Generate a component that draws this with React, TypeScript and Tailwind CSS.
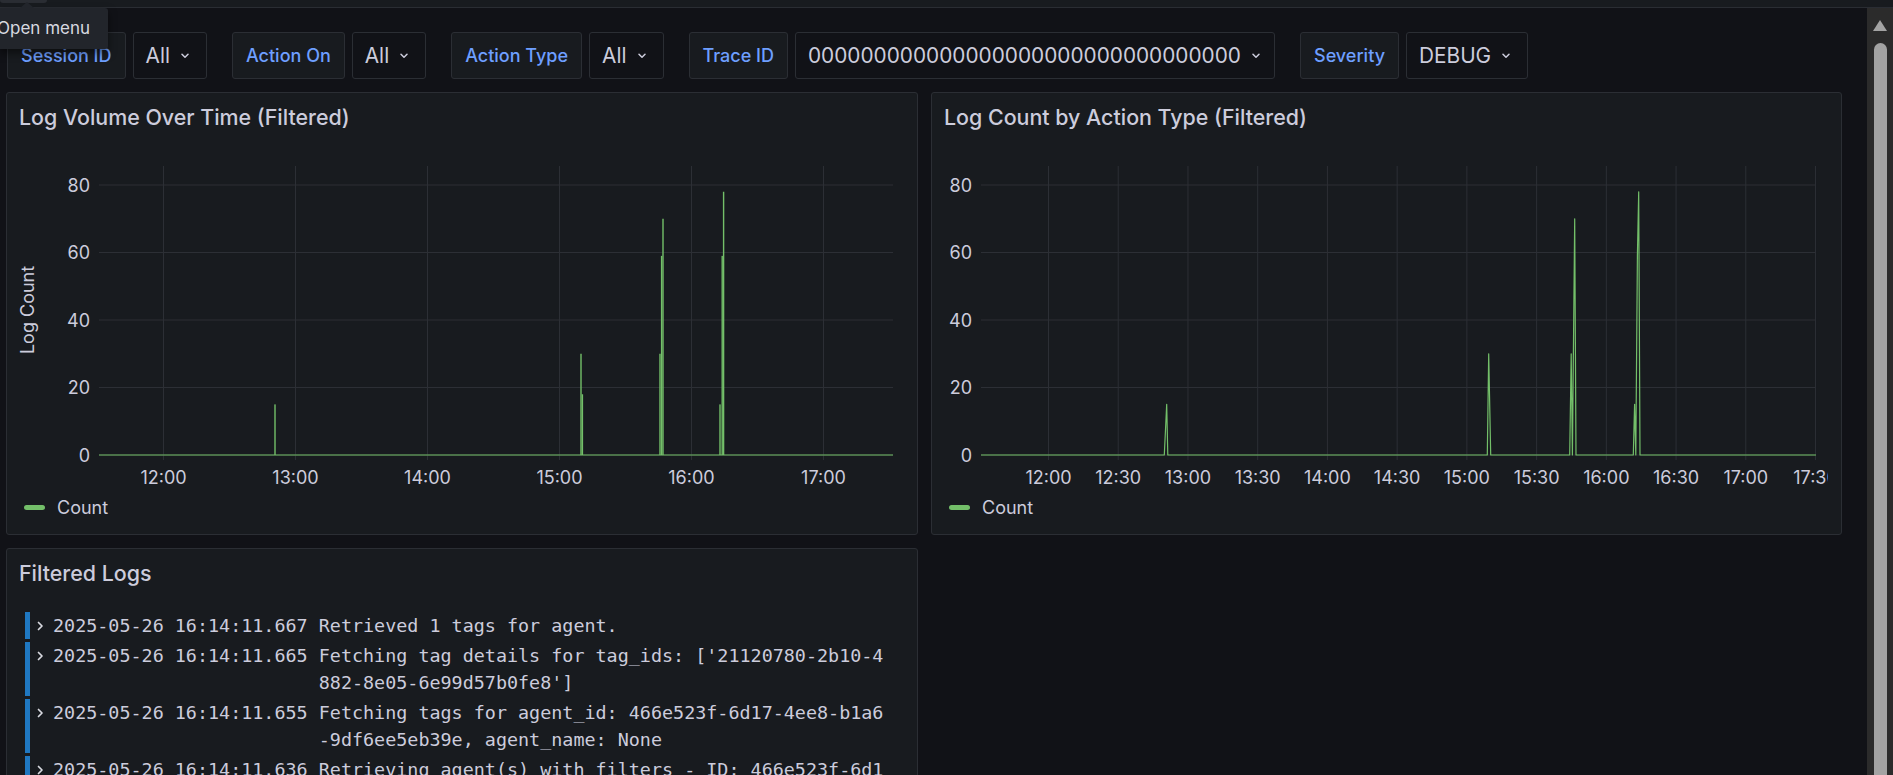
import React from 'react';

const GREEN = '#73bf69';
const GRID = '#2c2f35';
const TEXT = '#ccccdc';

type Variable = { label: string; value: string; width?: string };

const variables: Variable[] = [
  { label: 'Session ID', value: 'All' },
  { label: 'Action On', value: 'All' },
  { label: 'Action Type', value: 'All' },
  { label: 'Trace ID', value: '000000000000000000000000000000000', width: 'w-[480px]' },
  { label: 'Severity', value: 'DEBUG' },
];

const logs = [
  { ts: '2025-05-26 16:14:11.667', msg: 'Retrieved 1 tags for agent.' },
  {
    ts: '2025-05-26 16:14:11.665',
    msg: "Fetching tag details for tag_ids: ['21120780-2b10-4882-8e05-6e99d57b0fe8']",
  },
  {
    ts: '2025-05-26 16:14:11.655',
    msg: 'Fetching tags for agent_id: 466e523f-6d17-4ee8-b1a6-9df6ee5eb39e, agent_name: None',
  },
  {
    ts: '2025-05-26 16:14:11.636',
    msg: 'Retrieving agent(s) with filters - ID: 466e523f-6d17-4ee8-b1a6-9df6ee5eb39e, Name: None',
  },
];

const yTicks = [80, 60, 40, 20, 0];
const yOf = (v: number) => 362 - v * 3.375;

function Chevron() {
  return (
    <svg width="8" height="6" viewBox="0 0 8 6" className="shrink-0">
      <path d="M1 1.3l3 3 3-3" fill="none" stroke={TEXT} strokeWidth="1.5" strokeLinecap="round" strokeLinejoin="round" />
    </svg>
  );
}

function VariablePicker({ label, value, width }: Variable) {
  return (
    <div className="flex items-center gap-[7px]">
      <div className="flex h-[47px] items-center rounded-[3px] border border-[#2b2e34] bg-[#181b1f] px-[13px] text-[18px] font-medium text-[#6e9fff]">
        {label}
      </div>
      <div
        className={`flex h-[47px] items-center rounded-[3px] border border-[#2b2e34] bg-[#111217] pl-[12px] pr-[17px] text-[20.8px] text-[#ccccdc] ${width ?? ''}`}
      >
        <span className="mr-[11px]">{value}</span>
        <Chevron />
      </div>
    </div>
  );
}

function PanelTitle({ children }: { children: React.ReactNode }) {
  return (
    <div className="h-[60px] pl-[12px] pt-[11px] text-[21.4px] leading-[26px] font-medium text-[#ccccdc]">
      {children}
    </div>
  );
}

function Legend() {
  return (
    <div className="flex h-[28px] items-center pl-[17px] text-[18px] text-[#ccccdc]">
      <span className="h-[5px] w-[21px] rounded-full bg-[#73bf69]" />
      <span className="ml-[12px]">Count</span>
    </div>
  );
}

function VolumeChart() {
  const hours = ['12:00', '13:00', '14:00', '15:00', '16:00', '17:00'];
  const bars: [number, number][] = [
    [268, 15],
    [574, 30],
    [575.4, 18],
    [653, 30],
    [654.6, 59],
    [656, 70],
    [713, 15],
    [715.2, 59],
    [716.6, 78],
  ];
  return (
    <svg width="910" height="340" viewBox="0 60 910 340" className="block">
      {yTicks.map((v) => (
        <line key={v} x1="92" x2="886" y1={yOf(v)} y2={yOf(v)} stroke={GRID} />
      ))}
      {hours.map((h, i) => (
        <line key={h} x1={156.5 + i * 132} x2={156.5 + i * 132} y1="73" y2="367" stroke={GRID} />
      ))}
      {yTicks.map((v) => (
        <text key={v} x="83" y={yOf(v)} textAnchor="end" dominantBaseline="central" fill={TEXT} fontSize="18" fontFamily="Inter, sans-serif">
          {v}
        </text>
      ))}
      {hours.map((h, i) => (
        <text key={h} x={156.5 + i * 132} y="384" textAnchor="middle" dominantBaseline="central" fill={TEXT} fontSize="18" fontFamily="Inter, sans-serif">
          {h}
        </text>
      ))}
      <text
        x="20"
        y="217"
        transform="rotate(-90 20 217)"
        textAnchor="middle"
        dominantBaseline="central"
        fill={TEXT}
        fontSize="18"
        fontFamily="Inter, sans-serif"
      >
        Log Count
      </text>
      <line x1="92" x2="886" y1="362" y2="362" stroke={GREEN} strokeWidth="1" />
      {bars.map(([x, v], i) => (
        <rect key={i} x={x - 0.7} width="1.4" y={yOf(v)} height={362 - yOf(v)} fill={GREEN} />
      ))}
    </svg>
  );
}

function ActionChart() {
  const labels = ['12:00', '12:30', '13:00', '13:30', '14:00', '14:30', '15:00', '15:30', '16:00', '16:30', '17:00', '17:30'];
  const step = 69.73;
  const pts: [number, number][] = [
    [49, 0],
    [232.3, 0],
    [234.7, 15],
    [235.8, 0],
    [555.3, 0],
    [556.7, 30],
    [558.7, 0],
    [637.7, 0],
    [639.2, 30],
    [640.4, 0],
    [642.7, 70],
    [644, 0],
    [701.3, 0],
    [702.6, 15],
    [703.8, 0],
    [705.4, 59],
    [706.7, 78],
    [708, 0],
    [884, 0],
  ];
  const d = pts.map(([x, v], i) => `${i ? 'L' : 'M'}${x} ${yOf(v)}`).join(' ');
  return (
    <svg width="896" height="340" viewBox="0 60 896 340" className="block overflow-hidden">
      {yTicks.map((v) => (
        <line key={v} x1="49" x2="884" y1={yOf(v)} y2={yOf(v)} stroke={GRID} />
      ))}
      {labels.map((l, i) => (
        <line key={l} x1={116.5 + i * step} x2={116.5 + i * step} y1="73" y2="367" stroke={GRID} />
      ))}
      {yTicks.map((v) => (
        <text key={v} x="40" y={yOf(v)} textAnchor="end" dominantBaseline="central" fill={TEXT} fontSize="18" fontFamily="Inter, sans-serif">
          {v}
        </text>
      ))}
      {labels.map((l, i) => (
        <text key={l} x={116.5 + i * step} y="384" textAnchor="middle" dominantBaseline="central" fill={TEXT} fontSize="18" fontFamily="Inter, sans-serif">
          {l}
        </text>
      ))}
      <path d={d} fill="none" stroke={GREEN} strokeWidth="1.2" strokeLinejoin="round" />
    </svg>
  );
}

function LogRow({ ts, msg }: { ts: string; msg: string }) {
  return (
    <div className="mb-[3px] flex">
      <div className="w-[5px] shrink-0 bg-[#1f78c1]" />
      <div className="ml-[7px] flex h-[27px] w-[10px] shrink-0 items-center">
        <svg width="7" height="10" viewBox="0 0 7 10">
          <path d="M1.5 1.5l3.5 3.5-3.5 3.5" fill="none" stroke="#d8d9e0" strokeWidth="1.7" strokeLinecap="round" strokeLinejoin="round" />
        </svg>
      </div>
      <div className="ml-[6px] flex font-['DejaVu_Sans_Mono',monospace] text-[18.4px] leading-[27px] text-[#ccccdc]">
        <span className="shrink-0 whitespace-pre">{ts} </span>
        <span className="w-[51ch] break-all">{msg}</span>
      </div>
    </div>
  );
}

function Panel({ children, className }: { children: React.ReactNode; className?: string }) {
  return (
    <div className={`overflow-hidden rounded-[3px] border border-[#2b2e34] bg-[#181b1f] ${className ?? ''}`}>
      {children}
    </div>
  );
}

export default function App() {
  return (
    <div className="relative flex h-[775px] w-[1893px] flex-col overflow-hidden bg-[#111217] font-['Inter',sans-serif]">
      <div className="h-[8px] shrink-0 border-b border-[#2a2d33] bg-[#181b1f]">
        <div className="h-[3px] w-[47px] rounded-b-[3px] bg-[#2a2d33]" />
      </div>
      <div className="flex min-h-0 flex-1">
        <div className="flex w-[1867px] flex-col pl-[6px] pt-[24px]">
          <div className="flex gap-[25px] pl-[1px]">
            {variables.map((v) => (
              <VariablePicker key={v.label} {...v} />
            ))}
          </div>
          <div className="mt-[13px] grid grid-cols-[912px_911px] gap-[13px]">
            <Panel className="h-[443px]">
              <PanelTitle>Log Volume Over Time (Filtered)</PanelTitle>
              <VolumeChart />
              <Legend />
            </Panel>
            <Panel className="h-[443px]">
              <PanelTitle>Log Count by Action Type (Filtered)</PanelTitle>
              <ActionChart />
              <Legend />
            </Panel>
            <Panel className="h-[400px]">
              <PanelTitle>Filtered Logs</PanelTitle>
              <div className="pl-[18px] pt-[3px]">
                {logs.map((l) => (
                  <LogRow key={l.ts} {...l} />
                ))}
              </div>
            </Panel>
          </div>
        </div>
        <div className="relative flex-1 bg-[#2b2b2b]">
          <div className="mx-auto mt-[12px] h-0 w-0 border-x-[7px] border-b-[11px] border-x-transparent border-b-[#a3a3a3]" />
          <div className="mx-auto mt-[12px] h-[800px] w-[13px] rounded-full bg-[#a3a3a3]" />
        </div>
      </div>
      <div className="absolute left-0 top-[8px] flex h-[41px] w-[108px] items-center overflow-hidden rounded-r-[3px] bg-[#22252b] shadow-[0_4px_8px_rgba(0,0,0,0.5)]">
        <span className="-ml-[3px] whitespace-nowrap text-[17px] text-[#d8d9e0]">Open menu</span>
      </div>
      <div className="absolute left-[20px] top-[2px] h-0 w-0 border-x-[7px] border-b-[6px] border-x-transparent border-b-[#22252b]" />
    </div>
  );
}
